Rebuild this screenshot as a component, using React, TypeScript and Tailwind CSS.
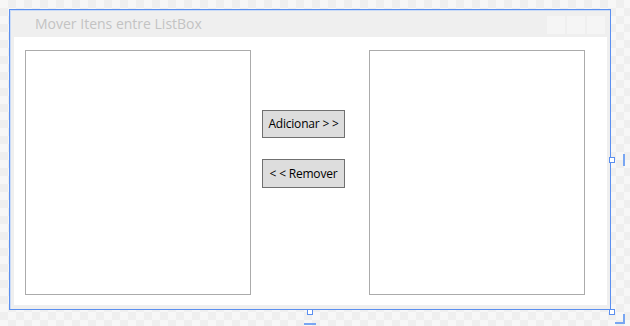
export default function App() {
  return (
    <div
      className="relative w-[630px] h-[326px] overflow-hidden pt-[9px] pl-[9px] bg-[#f7f7f7] bg-[image:conic-gradient(#efefef_25%,#f7f7f7_0_50%,#efefef_0_75%,#f7f7f7_0)] bg-size-[16px_16px]"
      style={{ fontFamily: '"Open Sans", "Noto Sans", sans-serif' }}
    >
      {/* window with designer selection outline */}
      <div className="w-[602px] h-[301px] p-[1px] bg-[#5b8ff0]">
        <div className="w-full h-full bg-[#efefef] border-l border-t border-[#c9dbf8] flex flex-col">
          <div className="h-[26px] flex items-center pl-[24px] pr-[5px]">
            <span className="text-[14px] text-[#c3c3c3] leading-none">Mover Itens entre ListBox</span>
            <div className="ml-auto flex gap-[2px] self-start mt-[5px]">
              <div className="w-[18px] h-[18px] bg-[#f5f5f5]" />
              <div className="w-[18px] h-[18px] bg-[#f5f5f5]" />
              <div className="w-[18px] h-[18px] bg-[#f5f5f5]" />
            </div>
          </div>
          <div className="ml-[3px] mr-[3px] h-[268px] bg-white flex pl-[11px] pt-[13px]">
            <div className="w-[226px] h-[245px] border border-[#ababab]" />
            <div className="w-[118px] flex flex-col items-start pl-[11px] pt-[60px] gap-[21px]">
              <button className="w-[83px] h-[28px] bg-[#dddddd] border border-[#707070] text-[12px] text-black tracking-[-0.2px]">
                Adicionar &gt; &gt;
              </button>
              <button className="w-[83px] h-[29px] bg-[#dddddd] border border-[#707070] text-[12px] text-black tracking-[-0.2px]">
                &lt; &lt; Remover
              </button>
            </div>
            <div className="w-[216px] h-[245px] border border-[#ababab]" />
          </div>
        </div>
      </div>

      {/* designer selection adorners */}
      <div className="absolute left-[307px] top-[309px] w-[6px] h-[6px] border border-[#5b8ff0] bg-white" />
      <div className="absolute left-[304px] top-[323px] w-[12px] h-[2px] bg-[#79a6f2]" />
      <div className="absolute left-[609px] top-[157px] w-[6px] h-[6px] border border-[#5b8ff0] bg-white" />
      <div className="absolute left-[623px] top-[154px] w-[2px] h-[12px] bg-[#79a6f2]" />
      <div className="absolute left-[609px] top-[309px] w-[6px] h-[6px] border border-[#5b8ff0] bg-white" />
      <div className="absolute left-[615px] top-[314px] w-[10px] h-[10px] border-r-2 border-b-2 border-[#79a6f2]" />
    </div>
  )
}
